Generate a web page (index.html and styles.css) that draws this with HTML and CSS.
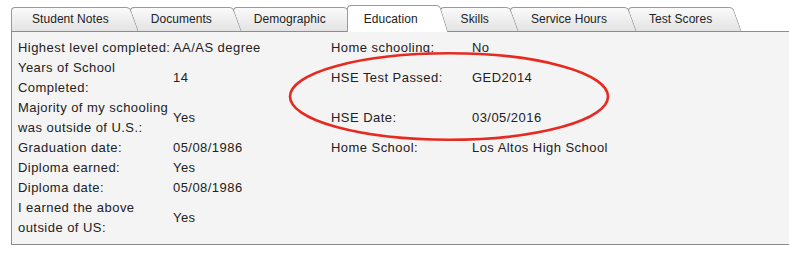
FILE: index.html
```html
<!DOCTYPE html>
<html lang="en">
<head>
    <meta charset="UTF-8">
    <meta name="viewport" content="width=device-width, initial-scale=1.0">
    <title>Client Profile - Education</title>
    <link rel="stylesheet" href="styles.css">
</head>
<body>
    <div class="profile">
        <div class="tabs">
            <div class="tab" style="z-index: 7">Student Notes</div>
            <div class="tab" style="z-index: 6">Documents</div>
            <div class="tab" style="z-index: 5">Demographic</div>
            <div class="tab active">Education</div>
            <div class="tab" style="z-index: 3">Skills</div>
            <div class="tab" style="z-index: 2">Service Hours</div>
            <div class="tab" style="z-index: 1">Test Scores</div>
        </div>

        <div class="panel">
            <table class="info">
                <colgroup>
                    <col class="col-label">
                    <col class="col-value">
                    <col class="col-label2">
                    <col>
                </colgroup>
                <tr>
                    <td class="nowrap">Highest level completed:</td>
                    <td>AA/AS degree</td>
                    <td>Home schooling:</td>
                    <td>No</td>
                </tr>
                <tr>
                    <td>Years of School Completed:</td>
                    <td>14</td>
                    <td>HSE Test Passed:</td>
                    <td>GED2014</td>
                </tr>
                <tr>
                    <td>Majority of my schooling was outside of U.S.:</td>
                    <td>Yes</td>
                    <td>HSE Date:</td>
                    <td>03/05/2016</td>
                </tr>
                <tr>
                    <td>Graduation date:</td>
                    <td>05/08/1986</td>
                    <td>Home School:</td>
                    <td>Los Altos High School</td>
                </tr>
                <tr>
                    <td>Diploma earned:</td>
                    <td>Yes</td>
                    <td></td>
                    <td></td>
                </tr>
                <tr>
                    <td>Diploma date:</td>
                    <td>05/08/1986</td>
                    <td></td>
                    <td></td>
                </tr>
                <tr>
                    <td>I earned the above outside of US:</td>
                    <td>Yes</td>
                    <td></td>
                    <td></td>
                </tr>
            </table>

            <!-- hand-drawn highlight around the HSE fields -->
            <svg class="highlight" width="324" height="92" viewBox="0 0 324 92">
                <ellipse cx="161" cy="46.5" rx="159" ry="43.3" fill="none" stroke="#e62a20" stroke-width="2.6"/>
            </svg>
        </div>
    </div>
</body>
</html>
```

FILE: styles.css
```css
body {
    margin: 0;
    background: #fff;
    font-family: "Liberation Sans", Arial, Helvetica, sans-serif;
    color: #222;
}
.profile {
    padding: 5px 0 0 11px;
    overflow: hidden;
}
.tabs {
    display: flex;
    align-items: flex-end;
    height: 26px;
    position: relative;
    z-index: 2;
}
.tab {
    position: relative;
    height: 24px;
    line-height: 24px;
    padding: 0 30px 0 21px;
    margin-right: -9px;
    font-size: 12px;
    letter-spacing: 0.05px;
    white-space: nowrap;
    cursor: pointer;
}
.tab::before,
.tab::after {
    content: '';
    position: absolute;
    top: 0;
    bottom: 0;
    z-index: -1;
    border-top: 1px solid #9a9a9a;
    background: linear-gradient(#fafafa, #e3e3e3);
}
.tab::before {
    left: 0;
    right: 16px;
    border-left: 1px solid #9a9a9a;
    border-radius: 4px 0 0 0;
}
.tab::after {
    right: 9px;
    width: 22px;
    border-right: 1px solid #9a9a9a;
    border-radius: 0 4px 0 0;
    transform: skewX(20deg);
    transform-origin: 0 0;
}
.tab.active {
    z-index: 10;
    height: 24px;
    padding-top: 2px;
    padding-bottom: 1px;
    margin-bottom: -1px;
    padding-left: 17px;
    padding-right: 31px;
}
.tab.active::before,
.tab.active::after {
    background: #fff;
}
.tab.active::after {
    transform: skewX(17deg);
}
.panel {
    position: relative;
    z-index: 1;
    margin-right: -20px;
    padding: 6px 0 6px 6px;
    background: #f4f4f4;
    border: 1px solid #8c8c8c;
}
.info {
    border-collapse: collapse;
    table-layout: fixed;
    width: 700px;
    font-size: 13px;
    line-height: 20px;
    letter-spacing: 0.45px;
}
.info td {
    padding: 0;
    vertical-align: middle;
}
.col-label {
    width: 155px;
}
.col-value {
    width: 158px;
}
.col-label2 {
    width: 141px;
}
.nowrap {
    white-space: nowrap;
}
.highlight {
    position: absolute;
    left: 276px;
    top: 18px;
    pointer-events: none;
}
```
